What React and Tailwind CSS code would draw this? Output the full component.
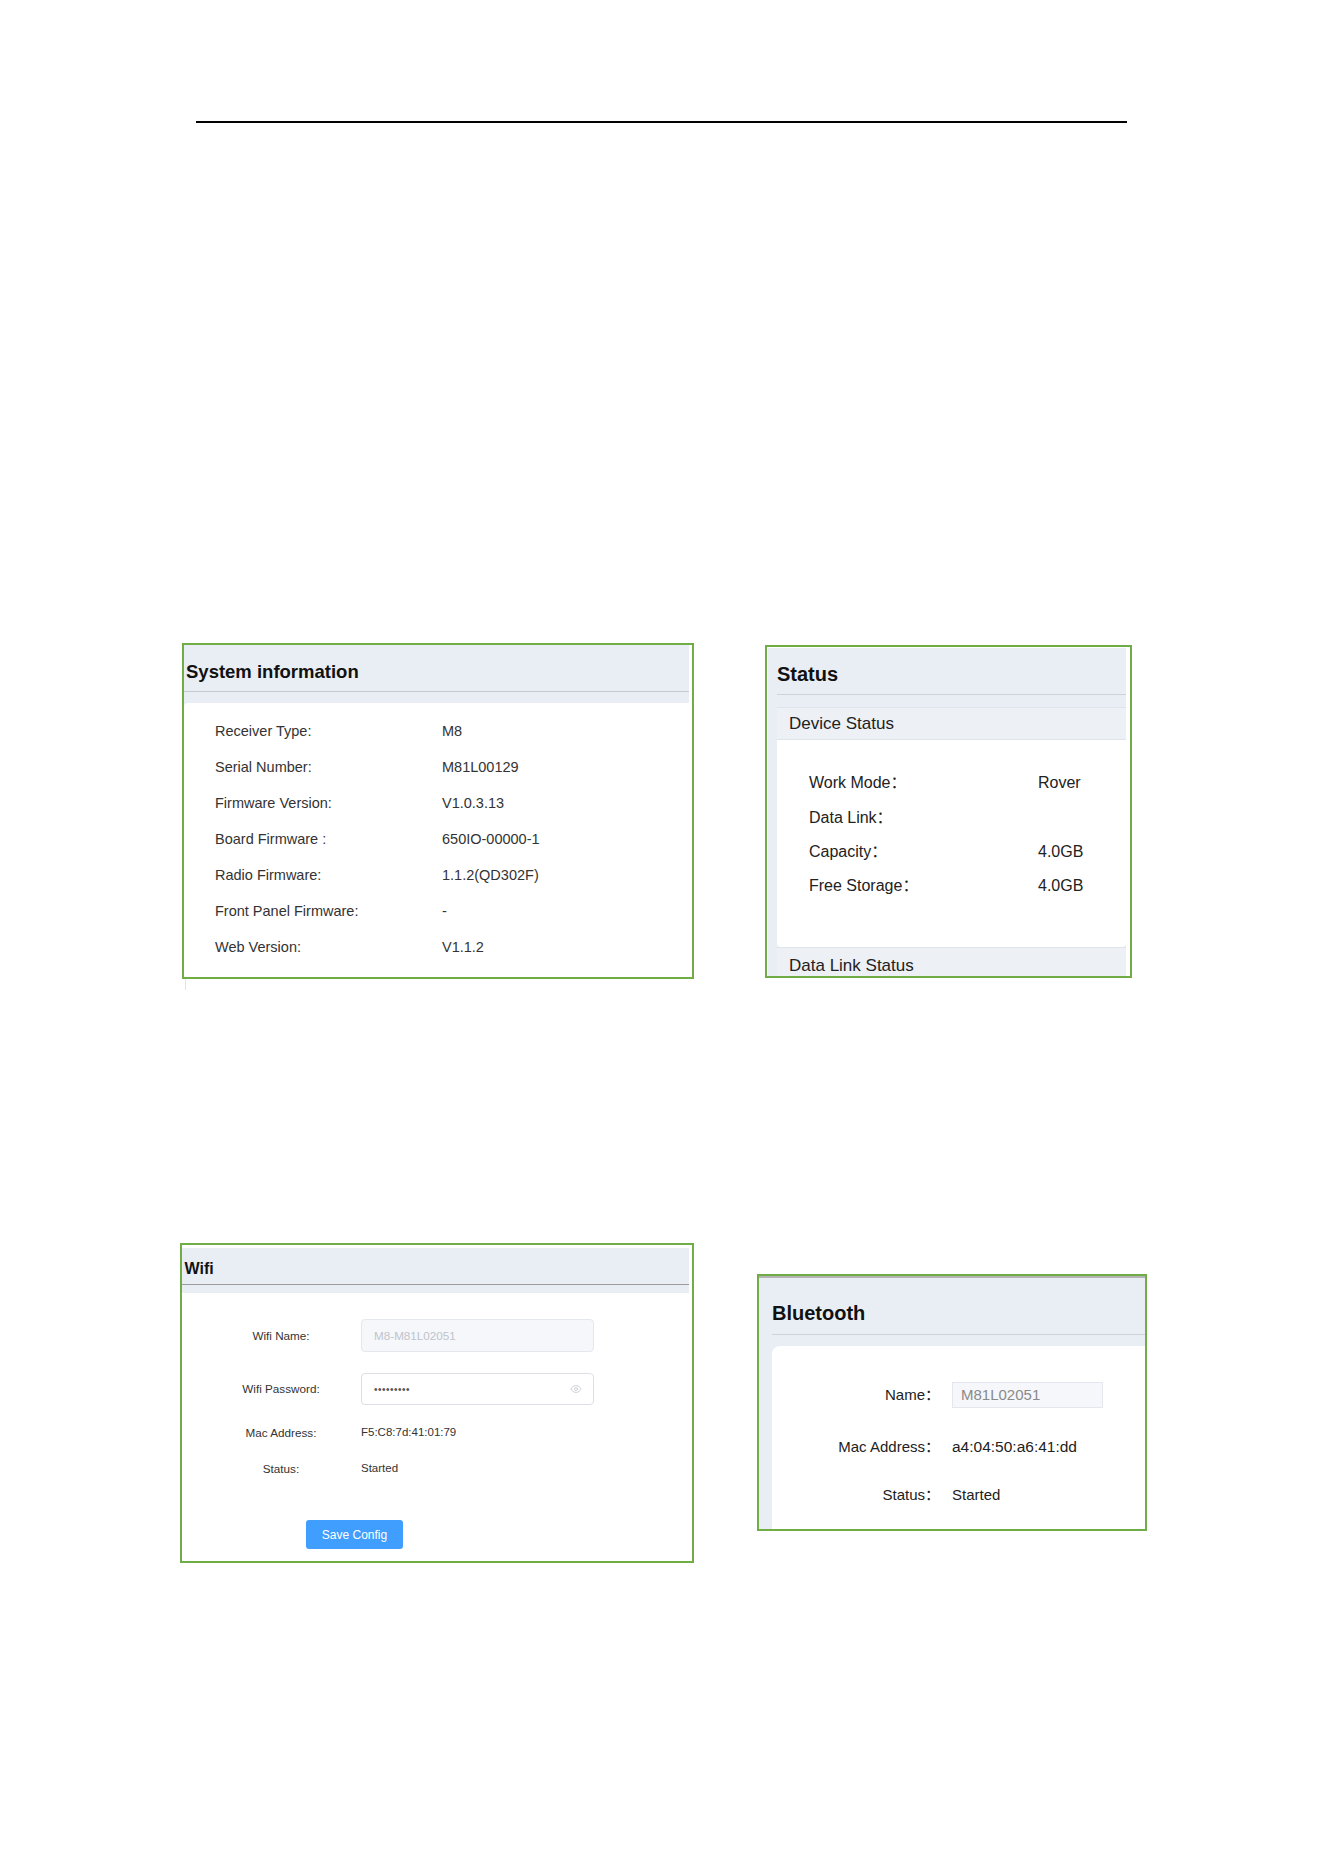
import React from "react";
import { Eye } from "lucide-react";

const sysRows = [
  ["Receiver Type:", "M8"],
  ["Serial Number:", "M81L00129"],
  ["Firmware Version:", "V1.0.3.13"],
  ["Board Firmware :", "650IO-00000-1"],
  ["Radio Firmware:", "1.1.2(QD302F)"],
  ["Front Panel Firmware:", "-"],
  ["Web Version:", "V1.1.2"],
];

const deviceRows = [
  ["Work Mode：", "Rover"],
  ["Data Link：", ""],
  ["Capacity：", "4.0GB"],
  ["Free Storage：", "4.0GB"],
];

function SystemInfo() {
  return (
    <div className="flex flex-col">
      <div className="h-[336px] w-[512px] border-2 border-[#70ad47]">
        <div className="flex h-full flex-col bg-[#e9eef4] mr-[3px]">
          <div className="flex h-[47px] items-center border-b border-[#c6cad0] pl-[2px] pt-[8px] text-[18.5px] font-bold text-[#111]">
            System information
          </div>
          <div className="h-[11px]" />
          <div className="flex-1 rounded-tl-[4px] bg-white pt-[11px]">
            {sysRows.map(([k, v]) => (
              <div key={k} className="flex h-[36px] items-center pl-[31px] text-[14.5px] text-[#333]">
                <span className="w-[227px]">{k}</span>
                <span>{v}</span>
              </div>
            ))}
          </div>
        </div>
      </div>
      <div className="ml-[3px] h-[11px] w-px bg-[#e4e4e4]" />
    </div>
  );
}

function StatusPanel() {
  return (
    <div className="mt-[2px] h-[333px] w-[367px] overflow-hidden border-2 border-[#70ad47]">
      <div className="ml-[1px] mr-[4px] mt-[1px] flex h-full flex-col bg-[#e9eef4]">
        <div className="ml-[9px] flex h-[47px] items-center border-b border-[#cfd3d9] pt-[5px] text-[20px] font-bold text-[#111]">
          Status
        </div>
        <div className="h-[12px]" />
        <div className="ml-[9px] flex h-[33px] items-center border-y border-[#dfe3ea] bg-[#edf0f5] pl-[12px] pt-[1px] text-[17px] text-[#222]">
          Device Status
        </div>
        <div className="ml-[9px] h-[207px] rounded-b-[4px] bg-white pt-[26px]">
          {deviceRows.map(([k, v]) => (
            <div key={k} className="flex h-[34.4px] items-center pl-[32px] text-[16px] text-[#222]">
              <span className="w-[229px]">{k}</span>
              <span>{v}</span>
            </div>
          ))}
        </div>
        <div className="ml-[9px] flex-1 border-t border-[#dfe3ea] bg-[#edf0f5] pl-[12px] pt-[7px] text-[17px] leading-[22px] text-[#222]">
          Data Link Status
        </div>
      </div>
    </div>
  );
}

function WifiPanel() {
  return (
    <div className="h-[320px] w-[514px] border-2 border-[#70ad47]">
      <div className="mr-[3px] mt-[3px] bg-[#e9eef4]">
        <div className="flex h-[37px] items-center border-b border-[#9c9c9c] pl-[2.5px] pt-[5px] text-[16px] font-bold text-[#111]">
          Wifi
        </div>
        <div className="h-[8px]" />
      </div>
      <div className="pt-[26px] text-[11.7px] text-[#333]">
        <div className="flex items-center pl-[39px]">
          <span className="w-[120px] text-center">Wifi Name:</span>
          <div className="ml-[20px] flex h-[33px] w-[233px] items-center rounded-[4px] border border-[#e4e7ed] bg-[#f5f7fa] pl-[12px] text-[#c0c4cc]">
            M8-M81L02051
          </div>
        </div>
        <div className="mt-[21px] flex items-center pl-[39px]">
          <span className="w-[120px] text-center">Wifi Password:</span>
          <div className="ml-[20px] flex h-[32px] w-[233px] items-center justify-between rounded-[4px] border border-[#dcdfe6] bg-white pl-[12px] pr-[11px]">
            <span className="text-[10px] tracking-[0.5px] text-[#555]">•••••••••</span>
            <Eye size={12} strokeWidth={1.5} className="text-[#c0c4cc]" />
          </div>
        </div>
        <div className="mt-[18px] flex h-[20px] items-center pl-[39px]">
          <span className="w-[120px] text-center">Mac Address:</span>
          <span className="ml-[20px] text-[11.5px]">F5:C8:7d:41:01:79</span>
        </div>
        <div className="mt-[16px] flex h-[20px] items-center pl-[39px]">
          <span className="w-[120px] text-center">Status:</span>
          <span className="ml-[20px] text-[11.5px]">Started</span>
        </div>
        <button className="ml-[124px] mt-[41px] h-[29px] w-[97px] rounded-[3px] bg-[#409eff] text-[12px] text-white">
          Save Config
        </button>
      </div>
    </div>
  );
}

function BluetoothPanel() {
  return (
    <div className="ml-[63px] mt-[31px] h-[257px] w-[390px] border-2 border-[#70ad47]">
      <div className="flex h-full flex-col border-t-2 border-[#b4b4b4] bg-[#e9eef4]">
        <div className="ml-[13px] flex h-[57px] items-center border-b border-[#d0d4da] pt-[14px] text-[20px] font-bold text-[#111]">
          Bluetooth
        </div>
        <div className="h-[11px]" />
        <div className="ml-[13px] flex-1 rounded-tl-[8px] bg-white pt-[36px] text-[15px] text-[#222]">
          <div className="flex h-[26px] items-center">
            <span className="w-[168px] text-right">Name：</span>
            <div className="ml-[12px] flex h-[26px] w-[151px] items-center border border-[#e4e7ed] bg-[#f5f7fa] pl-[8px] text-[#8a8a8a]">
              M81L02051
            </div>
          </div>
          <div className="mt-[27px] flex h-[24px] items-center">
            <span className="w-[168px] text-right">Mac Address：</span>
            <span className="ml-[12px] text-[15.5px]">a4:04:50:a6:41:dd</span>
          </div>
          <div className="mt-[24px] flex h-[24px] items-center">
            <span className="w-[168px] text-right">Status：</span>
            <span className="ml-[12px]">Started</span>
          </div>
        </div>
      </div>
    </div>
  );
}

export default function App() {
  return (
    <div className="min-h-[1872px] w-[1324px] bg-white font-['Liberation_Sans','Noto_Sans_CJK_SC',sans-serif]">
      <div className="pl-[196px] pt-[121px]">
        <div className="h-[2px] w-[931px] bg-black" />
      </div>

      <div className="mt-[520px] flex items-start pl-[182px]">
        <SystemInfo />
        <div className="ml-[71px]">
          <StatusPanel />
        </div>
      </div>

      <div className="mt-[253px] flex items-start pl-[180px]">
        <WifiPanel />
        <BluetoothPanel />
      </div>
    </div>
  );
}
